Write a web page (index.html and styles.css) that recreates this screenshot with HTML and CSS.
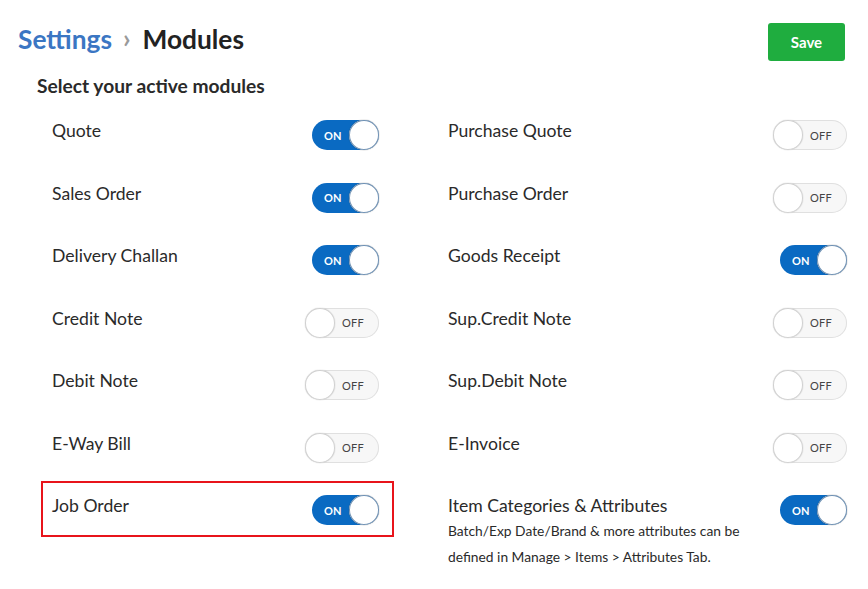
FILE: index.html
```html
<!DOCTYPE html>
<html>
<head>
<meta charset="utf-8">
<link rel="stylesheet" href="styles.css">
</head>
<body>
<div class="page">
  <div class="header">
    <h1 class="crumbs"><span class="crumb-link">Settings</span><span class="chev">&#8250;</span><span class="crumb-current">Modules</span></h1>
    <button class="save">Save</button>
  </div>
  <h2 class="subtitle">Select your active modules</h2>
  <div class="grid">
    <div class="row"><span class="label">Quote</span><span class="toggle on"><span class="txt">ON</span><span class="knob"></span></span></div>
    <div class="row"><span class="label">Purchase Quote</span><span class="toggle off"><span class="knob"></span><span class="txt">OFF</span></span></div>
    <div class="row"><span class="label">Sales Order</span><span class="toggle on"><span class="txt">ON</span><span class="knob"></span></span></div>
    <div class="row"><span class="label">Purchase Order</span><span class="toggle off"><span class="knob"></span><span class="txt">OFF</span></span></div>
    <div class="row"><span class="label">Delivery Challan</span><span class="toggle on"><span class="txt">ON</span><span class="knob"></span></span></div>
    <div class="row"><span class="label">Goods Receipt</span><span class="toggle on"><span class="txt">ON</span><span class="knob"></span></span></div>
    <div class="row"><span class="label">Credit Note</span><span class="toggle off"><span class="knob"></span><span class="txt">OFF</span></span></div>
    <div class="row"><span class="label">Sup.Credit Note</span><span class="toggle off"><span class="knob"></span><span class="txt">OFF</span></span></div>
    <div class="row"><span class="label">Debit Note</span><span class="toggle off"><span class="knob"></span><span class="txt">OFF</span></span></div>
    <div class="row"><span class="label">Sup.Debit Note</span><span class="toggle off"><span class="knob"></span><span class="txt">OFF</span></span></div>
    <div class="row"><span class="label">E-Way Bill</span><span class="toggle off"><span class="knob"></span><span class="txt">OFF</span></span></div>
    <div class="row"><span class="label">E-Invoice</span><span class="toggle off"><span class="knob"></span><span class="txt">OFF</span></span></div>
    <div class="row highlight"><span class="label">Job Order</span><span class="toggle on"><span class="txt">ON</span><span class="knob"></span></span></div>
    <div class="row tall"><div class="label-block"><span class="label">Item Categories &amp; Attributes</span><p class="desc">Batch/Exp Date/Brand &amp; more attributes can be defined in Manage &gt; Items &gt; Attributes Tab.</p></div><span class="toggle on"><span class="txt">ON</span><span class="knob"></span></span></div>
  </div>
</div>
</body>
</html>
```

FILE: styles.css
```css
* { box-sizing: border-box; }
body {
  margin: 0;
  font-family: Lato, "Open Sans", "Liberation Sans", sans-serif;
  color: #222;
  background: #fff;
}
.page { width: 868px; }
.header {
  display: flex;
  justify-content: space-between;
  align-items: flex-start;
  padding: 23px 23px 0 18px;
}
.crumbs {
  margin: -1px 0 0 0;
  font-size: 26.3px;
  font-weight: 700;
  line-height: 34px;
  display: flex;
  align-items: center;
}
.crumb-link { color: #3b76c3; }
.chev {
  color: #9a9a9a;
  font-size: 26px;
  margin: 0 12px 0 11px;
  position: relative;
  top: -1px;
}
.crumb-current { color: #222; }
.save {
  width: 77px;
  height: 38px;
  border: none;
  border-radius: 3px;
  background: #1fad3f;
  color: #fff;
  font-family: inherit;
  font-weight: 700;
  font-size: 15px;
}
.subtitle {
  margin: 13px 0 0 37px;
  font-size: 19.2px;
  font-weight: 700;
  line-height: 24px;
  color: #2a2a2a;
}
.grid {
  display: grid;
  grid-template-columns: 353px 425px;
  grid-auto-rows: auto;
  align-items: start;
  column-gap: 43px;
  row-gap: 6.5px;
  margin: 8px 0 0 41px;
}
.row {
  display: flex;
  justify-content: space-between;
  align-items: flex-start;
  border: 2px solid transparent;
  padding: 11px 13px 0 9px;
  height: 56px;
}
.row.tall { height: auto; }
.row.highlight { border-color: #e8141b; }
.label {
  font-size: 17.6px;
  line-height: 24px;
  color: #2a2a2a;
  display: block;
}
.desc {
  margin: 0;
  font-size: 13.8px;
  line-height: 26px;
  color: #2a2a2a;
  width: 310px;
}
.toggle {
  display: flex;
  align-items: center;
  height: 30px;
  border-radius: 15px;
  margin-top: 1px;
  flex-shrink: 0;
}
.toggle .txt {
  font-size: 11px;
  font-weight: 700;
  letter-spacing: 0.2px;
}
.toggle .knob {
  width: 30px;
  height: 30px;
  border-radius: 50%;
  background: #fff;
}
.toggle.on {
  width: 67px;
  background: #0a6ac2;
  padding-left: 12px;
}
.toggle.on .txt { color: #fff; }
.toggle.on .knob { margin-left: auto; box-shadow: inset 0 0 0 1px #6c8fb3, 0 0 1px #555; }
.toggle.off {
  width: 74px;
  background: #f7f7f7;
  box-shadow: inset 0 0 0 1px #e0e0e0;
}
.toggle.off .txt { color: #444; margin-left: 7px; font-weight: 400; }
.toggle.off .knob { box-shadow: inset 0 0 0 1px #d0d0d0, 0 0 1px #aaa; }
```
